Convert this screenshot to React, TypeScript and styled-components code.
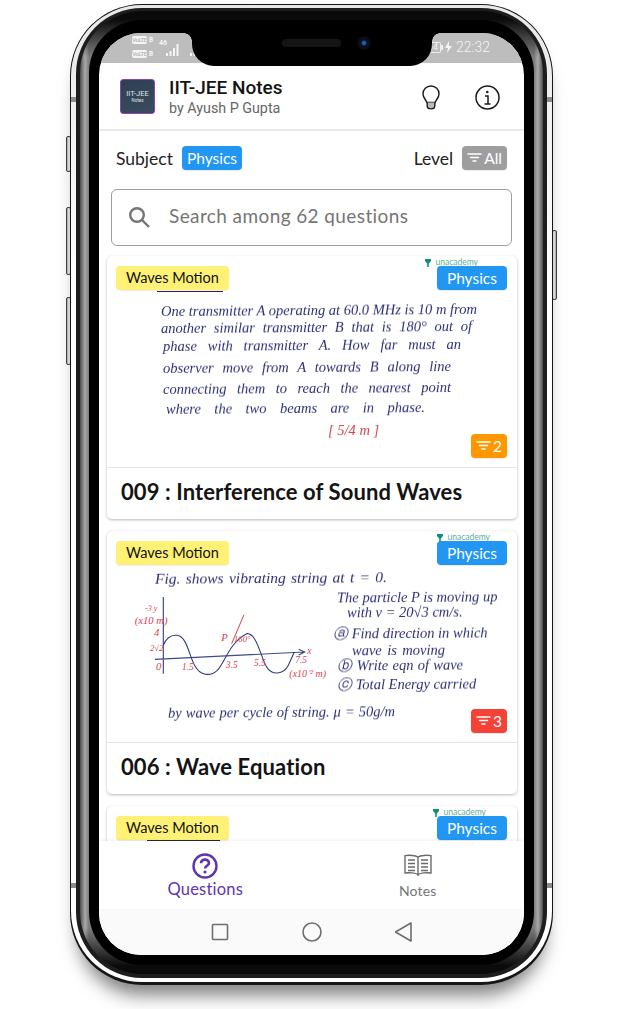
import React from "react";
import styled, { createGlobalStyle } from "styled-components";

const Global = createGlobalStyle`
  html, body { margin: 0; padding: 0; background: #fff; }
  * { box-sizing: border-box; }
`;

const UI = `Lato, "Open Sans", sans-serif`;
const HAND = `"Liberation Serif", serif`;

const Page = styled.div`
  position: relative; z-index: 0;
  width: 622px; height: 1009px; background: #fff; overflow: hidden;
  display: flex; align-items: flex-start; padding: 4px 0 0 70px;
`;
const Phone = styled.div`
  position: relative; width: 483px; height: 981px; flex: none; border-radius: 72px;
  background: #161616; padding: 1px 1px 3px 1px;
  box-shadow: 0 18px 18px -8px rgba(0,0,0,.5);
`;
const SideKey = styled.div<{ $side: "left" | "right"; $top: number; $h: number }>`
  position: absolute; top: ${p => p.$top}px; height: ${p => p.$h}px; width: 5px;
  ${p => p.$side}: -4px; z-index: -1;
  background: linear-gradient(${p => (p.$side === "left" ? "90deg" : "270deg")}, #aaa, #f2f2f2 60%, #ddd);
  border: 1px solid #444; border-radius: 2px;
`;
const Rim = styled.div`
  height: 100%; border-radius: 71px; padding: 3px 5px 4px;
  background: linear-gradient(180deg, #e8e8e8, #fff 30%, #fff);
`;
const Band = styled.div`
  position: relative; height: 100%; border-radius: 66px; padding: 3px 4px 4px; background: #1d1d1d;
`;
const Mark = styled.div<{ $side: "left" | "right"; $top: number }>`
  position: absolute; top: ${p => p.$top}px; ${p => p.$side}: -5px; width: 5px; height: 5px; background: #8c8c8c;
`;
const Metal = styled.div`
  height: 100%; border-radius: 62px; padding: 9px 9px;
  background:
    linear-gradient(180deg, #0a0a0a 0, #0a0a0a 8px, rgba(10,10,10,0) 46px, rgba(10,10,10,0) calc(100% - 46px), #0a0a0a calc(100% - 8px)),
    linear-gradient(90deg, #4d4d4d, #a9a9a9 5px, #7c7c7c 9px, #7c7c7c calc(100% - 9px), #a9a9a9 calc(100% - 5px), #4d4d4d);
`;
const Bezel = styled.div`
  height: 100%; border-radius: 53px; padding: 13px 10px 10px; background: #000;
`;
const Screen = styled.div`
  position: relative; height: 100%; border-radius: 42px; overflow: hidden; background: #fff;
  display: flex; flex-direction: column;
`;

const Notch = styled.div`
  position: absolute; top: 0; left: 93px; width: 240px; height: 33px; background: #000;
  border-radius: 0 0 22px 22px; z-index: 5;
  &::before, &::after { content: ""; position: absolute; top: 0; width: 8px; height: 8px; }
  &::before { left: -8px; background: radial-gradient(circle at 0 100%, transparent 7.5px, #000 8px); }
  &::after { right: -8px; background: radial-gradient(circle at 100% 100%, transparent 7.5px, #000 8px); }
`;
const Speaker = styled.div`
  position: absolute; left: 90px; top: 6px; width: 59px; height: 8px; border-radius: 4px; background: #141414;
`;
const Camera = styled.div`
  position: absolute; left: 165px; top: 3px; width: 14px; height: 14px; border-radius: 50%;
  background: radial-gradient(circle, #1c5fae 0, #1c5fae 1.5px, #0b1220 3px, #060a14 7px);
`;

const StatusBar = styled.div`
  height: 30px; flex: none; background: #bdbdbd; display: flex; align-items: flex-start; justify-content: space-between;
  padding: 3px 34px 0 33px; color: #f4f4f4; font-family: Roboto, sans-serif;
`;
const StatusLeft = styled.div` display: flex; `;
const SimCol = styled.div` display: flex; flex-direction: column; gap: 6px; width: 27px; `;
const Volte = styled.div`
  height: 8px; display: flex; align-items: center; gap: 2px;
  font-size: 6.5px; font-weight: 700; line-height: 8px;
  & > span:first-child { background: #f4f4f4; color: #bdbdbd; border-radius: 2px; width: 15px; overflow: hidden; text-align: center; letter-spacing: -.5px; font-size: 6px; }
`;
const NetRow = styled.div` display: flex; align-items: flex-start; width: 31px; `;
const NetCol = styled.div` width: 7px; font-size: 7px; font-weight: 700; line-height: 8px; padding-top: 3px; `;
const NetDots = styled.div` font-size: 4px; line-height: 5px; margin-top: 2px; opacity: .7; `;
const BarsSlot = styled.div` padding-top: 5px; `;
const StatusRight = styled.div` display: flex; align-items: center; gap: 4px; height: 22px; `;
const Battery = styled.div`
  position: relative; width: 16px; height: 11px; border: 1px solid #eee; border-left: 0; border-radius: 0 2px 2px 0;
  font-size: 9px; line-height: 9px; text-align: right; padding-right: 2px;
  &::after { content: ""; position: absolute; right: -3px; top: 2px; width: 1.5px; height: 5px; background: #eee; }
`;
const Clock = styled.div` font-size: 14px; font-weight: 300; `;

const Header = styled.header`
  height: 68px; flex: none; display: flex; align-items: center; padding: 0 24px 0 21px;
  border-bottom: 2px solid #ebebeb;
`;
const Logo = styled.div`
  width: 35px; height: 35px; flex: none; border: 1.5px solid #8e44ad; border-radius: 3px;
  background: linear-gradient(160deg, #2f3f55, #3a4c60); color: #dfe5ea;
  display: flex; flex-direction: column; align-items: center; justify-content: center; font-family: Roboto, sans-serif;
`;
const LogoTop = styled.div` font-size: 7.5px; line-height: 9px; `;
const LogoSub = styled.div` font-size: 4.5px; line-height: 6px; `;
const TitleBlock = styled.div` margin-left: 14px; padding-top: 2px; flex: 1; font-family: Roboto, sans-serif; `;
const AppTitle = styled.div` font-size: 19px; line-height: 22px; font-weight: 500; color: #141414; `;
const AppSub = styled.div` font-size: 14.3px; line-height: 18px; color: #666; `;
const HeadIcons = styled.div` display: flex; align-items: center; gap: 35px; padding-top: 2px; `;

const FilterRow = styled.div`
  height: 58px; flex: none; display: flex; align-items: center; padding: 0 17px 4px; font-family: ${UI};
  font-size: 17.5px; color: #222;
`;
const Label = styled.span<{ $push?: boolean }>` margin-right: 9px; ${p => p.$push && "margin-left: auto;"} `;
const Chip = styled.div<{ $bg: string; $color?: string; $pad?: number }>`
  height: 24px; display: inline-flex; align-items: center; justify-content: center; gap: 2px;
  padding: 0 ${p => p.$pad ?? 10}px 1px; border-radius: 4px; background: ${p => p.$bg}; color: ${p => p.$color ?? "#fff"};
  font-family: ${UI}; font-size: 15.5px; white-space: nowrap; box-shadow: 0 1px 1px rgba(0,0,0,.08);
`;
const Search = styled.div`
  height: 57px; flex: none; margin: 0 12px; border: 1px solid #9e9e9e; border-radius: 6px;
  display: flex; align-items: center; padding-left: 16px; gap: 18px;
  font-family: ${UI}; font-size: 19px; color: #757575; letter-spacing: .4px;
`;
const SearchText = styled.span` padding-bottom: 4px; `;

const List = styled.main`
  flex: 1; min-height: 0; overflow: hidden; padding: 10px 7px 0 8px; display: flex; flex-direction: column; gap: 12px;
`;
const Card = styled.article`
  flex: none; background: #fff; border-radius: 5px;
  box-shadow: 0 1px 3px rgba(0,0,0,.28);
`;
const NoteArea = styled.div`
  position: relative; height: 212px; overflow: hidden; border-bottom: 1px solid #e4e4e4; padding-top: 1px;
`;
const Brand = styled.div<{ $right: number }>`
  position: absolute; top: 2px; right: ${p => p.$right}px; display: flex; align-items: center; gap: 4px;
  font-family: ${UI}; font-size: 8.5px; line-height: 9px; color: #5dae9c;
`;
const Tag = styled(Chip)` position: absolute; top: 10px; left: 9px; color: #111; font-size: 14.5px; `;
const Subject = styled(Chip)` position: absolute; top: 10px; right: 10px; `;
const LevelBadge = styled(Chip)` position: absolute; bottom: 9px; right: 10px; padding: 0 5px 1px; `;
const Scrawl = styled.div<{ $top: number; $left: number; $w: number; $h?: number }>`
  margin: ${p => p.$top}px 0 0 ${p => p.$left}px; width: ${p => p.$w}px; height: ${p => p.$h ?? 1}px; background: #2b2b45;
`;
const NoteLine = styled.div<{ $top: number; $left: number; $w: number; $red?: boolean; $size?: number }>`
  margin: ${p => p.$top}px 0 0 ${p => p.$left}px; width: ${p => p.$w}px; height: 18px; line-height: 18px;
  font-family: ${HAND}; font-style: italic; font-size: ${p => p.$size ?? 14.5}px; color: ${p => (p.$red ? "#d8424f" : "#2d3075")};
  text-align: justify; text-align-last: justify; white-space: nowrap; overflow: visible;
  transform: rotate(-.4deg); filter: blur(.25px);
`;
const FigRow = styled.div` display: flex; height: 115px; margin-top: 1px; `;
const GraphSlot = styled.div` margin: 4px 0 0 23px; width: 200px; flex: none; `;
const FigCol = styled.div` flex: 1; `;
const CardTitle = styled.h2`
  margin: 0; height: 51px; display: flex; align-items: center; padding: 0 14px 4px;
  font-family: ${UI}; font-size: 22px; font-weight: 700; color: #141414; letter-spacing: .1px;
`;

const BottomNav = styled.nav`
  height: 68px; flex: none; display: flex; background: #fff; position: relative;
  box-shadow: 0 -1px 3px rgba(0,0,0,.06);
`;
const Tab = styled.div<{ $active?: boolean }>`
  flex: 1; display: flex; flex-direction: column; align-items: center; font-family: ${UI};
  color: ${p => (p.$active ? "#5e35b1" : "#757575")}; font-size: ${p => (p.$active ? 16.5 : 14)}px;
  padding-top: ${p => (p.$active ? 12 : 13)}px; line-height: ${p => (p.$active ? 21 : 27)}px; letter-spacing: .2px;
`;
const AndroidBar = styled.div`
  height: 46px; flex: none; background: #fafafa; display: flex; align-items: center; padding-left: 112px; gap: 73px;
`;

const FilterGlyph = ({ color = "#fff", w = 15 }: { color?: string; w?: number }) => (
  <svg width={w} height="11" viewBox="0 0 15 11" fill="none" stroke={color} strokeWidth="1.5" strokeLinecap="round">
    <path d="M1 2h13M3.5 5.5h8M6 9h3" />
  </svg>
);

const Bulb = () => (
  <svg width="18" height="25" viewBox="0 0 18 25" fill="none" stroke="#1b1b1b" strokeWidth="1.4">
    <path d="M9 1C4.4 1 1 4.6 1 8.9c0 3.6 2.6 5.3 3.9 8.6h8.2C14.4 14.2 17 12.5 17 8.9 17 4.6 13.6 1 9 1Z" />
    <path d="M5.2 17.5v3.6c0 1.6 1.6 2.8 3.8 2.8s3.8-1.2 3.8-2.8v-3.6" fill="#bbb" />
  </svg>
);
const InfoIcon = () => (
  <svg width="25" height="25" viewBox="0 0 25 25" fill="none" stroke="#1b1b1b">
    <circle cx="12.5" cy="12.5" r="11.5" strokeWidth="1.5" />
    <circle cx="12.3" cy="7" r="1.3" fill="#1b1b1b" stroke="none" />
    <path d="M10 11h3v8M9.5 19h6" strokeWidth="1.5" />
  </svg>
);
const SearchIcon = () => (
  <svg width="23" height="23" viewBox="0 0 23 23" fill="none" stroke="#757575" strokeWidth="2.4">
    <circle cx="9" cy="9" r="6.8" />
    <path d="M14 14l7 7" />
  </svg>
);
const Funnel = () => (
  <svg width="6" height="8" viewBox="0 0 6 8" fill="#0e8f7e">
    <path d="M0 0h6v2L3.8 4.5V8H2.2V4.5L0 2Z" />
  </svg>
);
const QuestionIcon = () => (
  <svg width="26" height="26" viewBox="0 0 26 26" fill="none" stroke="#5e35b1" strokeWidth="2.4">
    <circle cx="13" cy="13" r="11.5" />
    <path d="M9 10.2c0-2.2 1.8-3.6 4-3.6s4 1.4 4 3.4c0 2.8-4 2.8-4 5.6" strokeWidth="2.6" />
    <circle cx="13" cy="19" r="1.6" fill="#5e35b1" stroke="none" />
  </svg>
);
const BookIcon = () => (
  <svg width="28" height="23" viewBox="0 0 28 23" fill="none" stroke="#6a6a6a" strokeWidth="1.4">
    <path d="M14 3C11.5 1.4 5 1 1 1.6V19c4-.6 10.5-.2 13 1.5 2.5-1.7 9-2.1 13-1.5V1.6C23 1 16.5 1.4 14 3Z" />
    <path d="M14 3v19" />
    <path d="M4 6h7M4 9.5h7M4 13h7M4 16.5h7M17 6h7M17 9.5h7M17 13h7M17 16.5h7" strokeWidth="1.5" />
  </svg>
);
const SignalBars = () => (
  <svg width="14" height="12" viewBox="0 0 14 12" fill="#f4f4f4">
    <path d="M0 9h2v3H0zM3.5 7h2v5h-2zM7 4h2v8H7zM10.5 0h2v12h-2z" />
  </svg>
);

const Graph = () => (
  <svg width="200" height="90" viewBox="90 190 600 270" fill="none">
    <g stroke="#3d4a86" strokeWidth="3.5">
      <path d="M190 205V435M165 392L612 370M596 362l18 8-18 9" />
    </g>
    <path d="M190 350C200 325 215 318 232 320C262 325 268 385 285 412C300 440 330 445 352 425C375 400 390 340 440 315C470 312 480 380 500 415C515 440 550 440 565 410L582 372" stroke="#2f3a7c" strokeWidth="3.2" />
    <path d="M395 345L432 258" stroke="#d8424f" strokeWidth="3" />
    <g fill="#d8424f" fontFamily="Liberation Serif, serif" fontStyle="italic" fontSize="32">
      <text x="104" y="285">(x10 m)</text>
      <text x="135" y="248" fontSize="24">-3 y</text>
      <text x="162" y="322">4</text>
      <text x="150" y="366" fontSize="26">2√2</text>
      <text x="168" y="424">0</text>
      <text x="246" y="424" fontSize="28">1.5</text>
      <text x="378" y="418" fontSize="28">3.5</text>
      <text x="462" y="412" fontSize="28">5.5</text>
      <text x="586" y="404" fontSize="28">7.5</text>
      <text x="622" y="376" fontSize="28">x</text>
      <text x="364" y="338">P</text>
      <text x="402" y="340" fontSize="26">160°</text>
      <text x="568" y="446" fontSize="30">(x10⁻² m)</text>
    </g>
  </svg>
);

const Tags = ({ brand, level }: { brand: number; level?: { n: number; bg: string } }) => (
  <>
    <Brand $right={brand}><Funnel />unacademy</Brand>
    <Tag $bg="#fff176">Waves Motion</Tag>
    <Subject $bg="#2196f3">Physics</Subject>
    {level && <LevelBadge $bg={level.bg}><FilterGlyph />{level.n}</LevelBadge>}
  </>
);

export default function App() {
  return (
    <Page>
      <Global />
      <Phone>
        <SideKey $side="left" $top={132} $h={36} />
        <SideKey $side="left" $top={203} $h={68} />
        <SideKey $side="left" $top={293} $h={68} />
        <SideKey $side="right" $top={226} $h={70} />
        <Rim>
          <Band>
            <Mark $side="left" $top={89} />
            <Mark $side="right" $top={89} />
            <Mark $side="left" $top={875} />
            <Mark $side="right" $top={875} />
            <Metal>
              <Bezel>
                <Screen>
                  <Notch>
                    <Speaker />
                    <Camera />
                  </Notch>
                  <StatusBar>
                    <StatusLeft>
                      <SimCol>
                        <Volte><span>VoLTE</span><span>B</span></Volte>
                        <Volte><span>VoLTE</span><span>B</span></Volte>
                      </SimCol>
                      <NetRow>
                        <NetCol>46<NetDots>..</NetDots></NetCol>
                        <BarsSlot><SignalBars /></BarsSlot>
                      </NetRow>
                      <BarsSlot><SignalBars /></BarsSlot>
                    </StatusLeft>
                    <StatusRight>
                      <Battery>64</Battery>
                      <svg width="7" height="12" viewBox="0 0 7 12" fill="#f4f4f4"><path d="M4 0L0 7h3l-1 5 5-7H4z" /></svg>
                      <Clock>22:32</Clock>
                    </StatusRight>
                  </StatusBar>
                  <Header>
                    <Logo>
                      <LogoTop>IIT-JEE</LogoTop>
                      <LogoSub>Notes</LogoSub>
                    </Logo>
                    <TitleBlock>
                      <AppTitle>IIT-JEE Notes</AppTitle>
                      <AppSub>by Ayush P Gupta</AppSub>
                    </TitleBlock>
                    <HeadIcons>
                      <Bulb />
                      <InfoIcon />
                    </HeadIcons>
                  </Header>
                  <FilterRow>
                    <Label>Subject</Label>
                    <Chip $bg="#2196f3" $pad={5}>Physics</Chip>
                    <Label $push>Level</Label>
                    <Chip $bg="#9e9e9e" $pad={5}><FilterGlyph />All</Chip>
                  </FilterRow>
                  <Search>
                    <SearchIcon />
                    <SearchText>Search among 62 questions</SearchText>
                  </Search>
                  <List>
                    <Card>
                      <NoteArea>
                        <Tags brand={39} level={{ n: 2, bg: "#ff9800" }} />
                        <Scrawl $top={34} $left={50} $w={66} />
                        <NoteLine $top={9} $left={54} $w={312}>One transmitter A operating at 60.0 MHz is 10 m from</NoteLine>
                        <NoteLine $top={-1} $left={54} $w={311}>another similar transmitter B that is 180° out of</NoteLine>
                        <NoteLine $top={0} $left={56} $w={298}>phase with transmitter A. How far must an</NoteLine>
                        <NoteLine $top={4} $left={56} $w={288}>observer move from A towards B along line</NoteLine>
                        <NoteLine $top={3} $left={56} $w={288}>connecting them to reach the nearest point</NoteLine>
                        <NoteLine $top={2} $left={59} $w={259}>where the two beams are in phase.</NoteLine>
                        <NoteLine $top={4} $left={221} $w={48} $red>[ 5/4 m ]</NoteLine>
                      </NoteArea>
                      <CardTitle>009 : Interference of Sound Waves</CardTitle>
                    </Card>
                    <Card>
                      <NoteArea>
                        <Tags brand={27} level={{ n: 3, bg: "#f44336" }} />
                        <NoteLine $top={37} $left={48} $w={232} $size={15.5}>Fig. shows vibrating string at t = 0.</NoteLine>
                        <FigRow>
                          <GraphSlot><Graph /></GraphSlot>
                          <FigCol>
                            <NoteLine $top={0} $left={7} $w={140}>The particle P is moving up</NoteLine>
                            <NoteLine $top={-3} $left={17} $w={103}>with v = 20√3 cm/s.</NoteLine>
                            <NoteLine $top={3} $left={3} $w={144}>ⓐ Find direction in which</NoteLine>
                            <NoteLine $top={-1} $left={22} $w={93}>wave is moving</NoteLine>
                            <NoteLine $top={-3} $left={7} $w={126}>ⓑ Write eqn of wave</NoteLine>
                            <NoteLine $top={1} $left={7} $w={138}>ⓒ Total Energy carried</NoteLine>
                          </FigCol>
                        </FigRow>
                        <NoteLine $top={0} $left={61} $w={227}>by wave per cycle of string. μ = 50g/m</NoteLine>
                      </NoteArea>
                      <CardTitle>006 : Wave Equation</CardTitle>
                    </Card>
                    <Card>
                      <NoteArea>
                        <Tags brand={31} />
                        <Scrawl $top={31} $left={40} $w={73} $h={4} />
                      </NoteArea>
                    </Card>
                  </List>
                  <BottomNav>
                    <Tab $active>
                      <QuestionIcon />
                      Questions
                    </Tab>
                    <Tab>
                      <BookIcon />
                      Notes
                    </Tab>
                  </BottomNav>
                  <AndroidBar>
                    <svg width="18" height="18" viewBox="0 0 18 18" fill="none" stroke="#6e6e6e" strokeWidth="1.6"><rect x="1.5" y="1.5" width="15" height="15" rx="1" /></svg>
                    <svg width="20" height="20" viewBox="0 0 20 20" fill="none" stroke="#6e6e6e" strokeWidth="1.6"><circle cx="10" cy="10" r="9" /></svg>
                    <svg width="18" height="20" viewBox="0 0 18 20" fill="none" stroke="#6e6e6e" strokeWidth="1.6" strokeLinejoin="round"><path d="M16 1v18L.5 10Z" /></svg>
                  </AndroidBar>
                </Screen>
              </Bezel>
            </Metal>
          </Band>
        </Rim>
      </Phone>
    </Page>
  );
}
